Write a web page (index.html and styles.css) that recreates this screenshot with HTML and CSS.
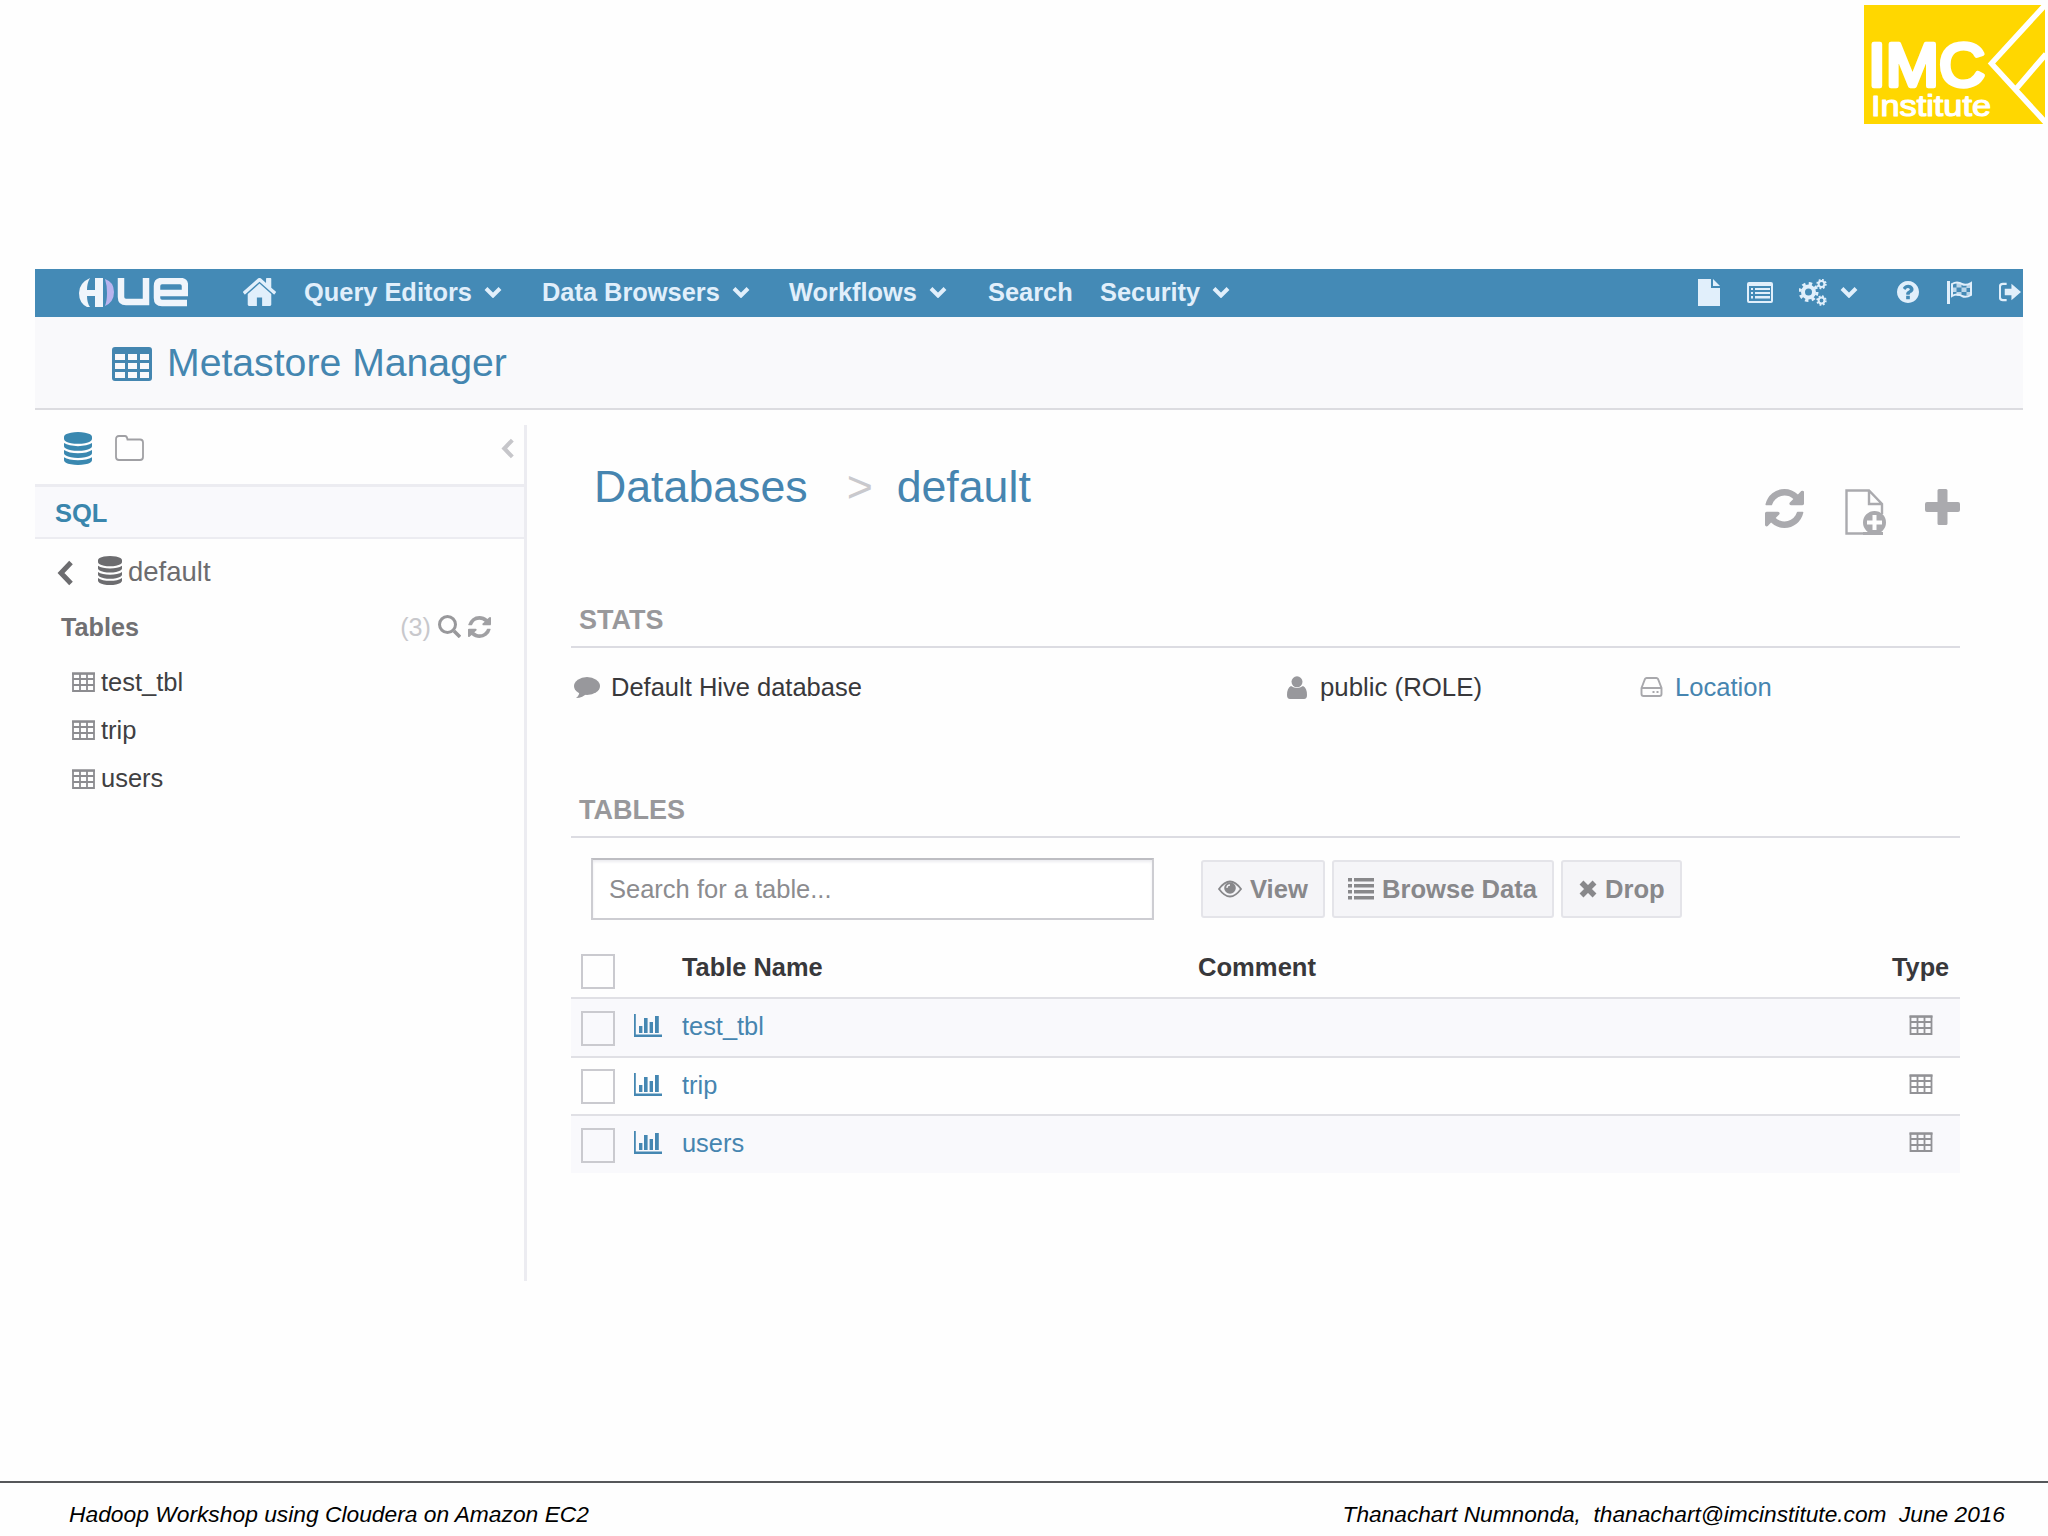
FILE: index.html
```html
<!DOCTYPE html>
<html lang="en">
<head>
<meta charset="utf-8">
<title>Metastore Manager</title>
<link rel="stylesheet" href="styles.css">
</head>
<body>
<svg class="defs" width="0" height="0" aria-hidden="true">
  <symbol id="refresh" viewBox="128 128 1536 1536" preserveAspectRatio="none"><path d="M1639 1056q0 5-1 7-64 268-268 434.5t-478 166.5q-146 0-282.5-55t-243.5-157l-129 129q-19 19-45 19t-45-19-19-45v-448q0-26 19-45t45-19h448q26 0 45 19t19 45-19 45l-137 137q71 66 161 102t187 36q134 0 250-65t186-179q11-17 53-117 8-23 30-23h192q13 0 22.5 9.5t9.5 22.5zm25-800v448q0 26-19 45t-45 19h-448q-26 0-45-19t-19-45 19-45l138-138q-148-137-349-137-134 0-250 65t-186 179q-11 17-53 117-8 23-30 23h-199q-13 0-22.5-9.5t-9.5-22.5v-7q65-268 270-434.5t480-166.5q146 0 284 55.5t245 156.5l130-129q19-19 45-19t45 19 19 45z"/></symbol>
  <symbol id="home" viewBox="89 256 1614 1280" preserveAspectRatio="none"><path d="M1472 992v480q0 26-19 45t-45 19h-384v-384h-256v384h-384q-26 0-45-19t-19-45v-480q0-1 .5-3t.5-3l575-474 575 474q1 2 1 6zm223-69l-62 74q-8 9-21 11h-3q-13 0-21-7l-692-577-692 577q-12 8-24 7-13-2-21-11l-62-74q-8-10-7-23.5t11-21.5l719-599q32-26 76-26t76 26l244 204v-195q0-14 9-23t23-9h192q14 0 23 9t9 23v408l219 182q10 8 11 21.5t-7 23.5z"/></symbol>
  <symbol id="database" viewBox="128 0 1536 1792" preserveAspectRatio="none"><path d="M896 768q237 0 443-43t325-127v170q0 69-103 128t-280 93.5-385 34.5-385-34.5-280-93.5-103-128v-170q119 84 325 127t443 43zm0 768q237 0 443-43t325-127v170q0 69-103 128t-280 93.5-385 34.5-385-34.5-280-93.5-103-128v-170q119 84 325 127t443 43zm0-384q237 0 443-43t325-127v170q0 69-103 128t-280 93.5-385 34.5-385-34.5-280-93.5-103-128v-170q119 84 325 127t443 43zm0-1152q208 0 385 34.5t280 93.5 103 128v128q0 69-103 128t-280 93.5-385 34.5-385-34.5-280-93.5-103-128v-128q0-69 103-128t280-93.5 385-34.5z"/></symbol>
  <symbol id="help" viewBox="128 128 1536 1536"><path d="M1024 1376v-192q0-14-9-23t-23-9h-192q-14 0-23 9t-9 23v192q0 14 9 23t23 9h192q14 0 23-9t9-23zm256-672q0-88-55.5-163t-138.5-116-170-41q-243 0-371 213-15 24 8 42l132 100q7 6 19 6 16 0 25-12 53-68 86-92 34-24 86-24 48 0 85.5 26t37.5 59q0 38-20 61t-68 45q-63 28-115.5 86.5t-52.5 125.5v36q0 14 9 23t23 9h192q14 0 23-9t9-23q0-19 21.5-49.5t54.5-49.5q32-18 49-28.5t46-35 44.5-48 28-60.5 12.5-81zm384 192q0 209-103 385.5t-279.5 279.5-385.5 103-385.5-103-279.5-279.5-103-385.5 103-385.5 279.5-279.5 385.5-103 385.5 103 279.5 279.5 103 385.5z"/></symbol>
  <symbol id="down" viewBox="0 0 18 12"><path d="M2 2.5l7 7 7-7" fill="none" stroke="currentColor" stroke-width="4"/></symbol>
  <symbol id="left" viewBox="0 0 16 26"><path d="M14 2.5L4 13l10 10.5" fill="none" stroke="currentColor" stroke-width="5"/></symbol>
  <symbol id="table" viewBox="0 0 40 34" preserveAspectRatio="none"><path fill-rule="evenodd" d="M3 0h34q3 0 3 3v28q0 3-3 3H3q-3 0-3-3V3q0-3 3-3zM3 7v6h10V7zm13 0v6h9V7zm12 0v6h9V7zM3 16v6h10v-6zm13 0v6h9v-6zm12 0v6h9v-6zM3 25v6h10v-6zm13 0v6h9v-6zm12 0v6h9v-6z"/></symbol>
  <symbol id="grid" viewBox="0 0 23 20"><path d="M1 1.5h21v17.5H1zM1 7h21M1 13h21M8 1v18M15 1v18" fill="none" stroke="currentColor" stroke-width="1.8"/><path d="M0 .5h23v2.2H0z"/></symbol>
  <symbol id="chart" viewBox="0 0 28 24"><path d="M0 1h1.8v20.5H28V24H0zM5 13h3.4v7H5zM10 5h3.6v15H10zM15.600 9h3.400v11h-3.400zM21 3h3.800v17H21z"/></symbol>
</svg>

<header class="slide-head">
  <svg class="imc" viewBox="0 0 181 119" role="img" aria-label="IMC Institute">
    <path fill="#ffd700" d="M0 0h181v119H0z"/>
    <path d="M182-1L127.500 58.500 182 118M182 49l-30 35" fill="none" stroke="#fff" stroke-width="5.500"/>
    <text class="imc-name" x="4" y="81" textLength="117" lengthAdjust="spacingAndGlyphs">IMC</text>
    <text class="imc-sub" x="7" y="110.500" textLength="120" lengthAdjust="spacingAndGlyphs">Institute</text>
  </svg>
</header>

<div class="app">
  <nav class="navbar">
    <svg class="hue" viewBox="0 0 109 29" role="img" aria-label="Hue">
      <path d="M11 0Q0 5 0 15t8 14h3Q8 25 8 18h8v11h8V0h-8v12H8Q8 5 11 0z"/>
      <path fill="#b9b4ee" d="M26 1q9 3 9 13t-9 14q2-5 2-13T26 1z"/>
      <path d="M42 0v19q0 5 5 5h20V0M108 25H83q-5 0-5-5V8q0-5 5-5h18q5 0 5 5v7H80" fill="none" stroke="currentColor" stroke-width="6.500"/>
    </svg>
    <svg class="home"><use href="#home"/></svg>
    <a class="menu w-query">Query Editors<svg class="caret"><use href="#down"/></svg></a>
    <a class="menu w-data">Data Browsers<svg class="caret"><use href="#down"/></svg></a>
    <a class="menu w-flows">Workflows<svg class="caret"><use href="#down"/></svg></a>
    <a class="menu w-search">Search</a>
    <a class="menu">Security<svg class="caret"><use href="#down"/></svg></a>
    <div class="tools">
      <svg class="t-file" viewBox="0 0 22 27"><path d="M0 0h13v9h9v18H0z"/><path d="M15 0l7 7h-7z"/></svg>
      <svg class="t-list" viewBox="0 0 26 21"><path fill-rule="evenodd" d="M2 0h22q2 0 2 2v17q0 2-2 2H2q-2 0-2-2V2q0-2 2-2zm0 4v15h22V4z"/><path d="M4 6h2v2H4zm4 0h15v2H8zM4 10h2v2H4zm4 0h15v2H8zM4 14h2v2.500H4zm4 0h15v2.500H8z"/></svg>
      <svg class="t-cogs" viewBox="0 0 28 27"><g fill="none" stroke="currentColor"><circle cx="9.500" cy="13" r="5.500" stroke-width="4"/><circle cx="9.500" cy="13" r="8.500" stroke-width="3" stroke-dasharray="3.400 3.275"/><circle cx="22.500" cy="5" r="2.900" stroke-width="2"/><circle cx="22.500" cy="5" r="4.300" stroke-width="1.800" stroke-dasharray="1.800 1.577"/><circle cx="22.500" cy="21.500" r="2.900" stroke-width="2"/><circle cx="22.500" cy="21.500" r="4.300" stroke-width="1.800" stroke-dasharray="1.800 1.577"/></g></svg>
      <svg class="caret t-caret"><use href="#down"/></svg>
      <svg class="t-help"><use href="#help"/></svg>
      <svg class="t-flag" viewBox="0 0 25 23"><path d="M0 0h3v23H0z"/><path d="M5 3q5-3 10 0 4 2 9-1v12q-5 3-9 1-5-3-10 0z" fill="none" stroke="currentColor" stroke-width="2"/><path d="M9.500 1.500h5v5h-5zM5 6.500h4.500v4.500H5zM14.500 6.500h5v4.500h-5zM9.500 11h5v4h-5zM19.500 3H24v4h-4.500zM19.500 11H24v3.500h-4.500z" fill-opacity=".75"/></svg>
      <svg class="t-out" viewBox="0 0 23 20"><path d="M8 1.500H4q-3 0-3 3v11q0 3 3 3h4" fill="none" stroke="currentColor" stroke-width="2.200"/><path d="M6 6.500h7V1.500L23 10l-10 8.500v-5H6z"/></svg>
    </div>
  </nav>

  <div class="title-bar">
    <svg class="title-icon"><use href="#table"/></svg>
    <h1>Metastore Manager</h1>
  </div>

  <div class="body">
    <aside class="sidebar">
      <div class="tabs">
        <svg class="tab-db"><use href="#database"/></svg>
        <svg class="tab-folder" viewBox="0 0 29 26"><path d="M1 4.500Q1 1 4 1h6q2 0 2.500 3.500H25q3 0 3 3V22q0 3-3 3H4q-3 0-3-3z" fill="none" stroke="currentColor" stroke-width="1.800"/></svg>
        <svg class="collapse"><use href="#left"/></svg>
      </div>
      <div class="source">SQL</div>
      <div class="current">
        <svg class="back"><use href="#left"/></svg>
        <svg class="db"><use href="#database"/></svg>
        <span>default</span>
      </div>
      <div class="tables-head">
        <strong>Tables</strong>
        <span class="count">(3)</span>
        <svg class="search" viewBox="0 0 23 23"><path d="M16 16l6 6" stroke="currentColor" stroke-width="3.500"/><circle cx="9.500" cy="9.500" r="8" fill="none" stroke="currentColor" stroke-width="3"/></svg>
        <svg class="reload"><use href="#refresh"/></svg>
      </div>
      <ul class="side-list">
        <li><svg><use href="#grid"/></svg>test_tbl</li>
        <li><svg><use href="#grid"/></svg>trip</li>
        <li><svg><use href="#grid"/></svg>users</li>
      </ul>
    </aside>

    <main>
      <div class="crumb-row">
        <div class="crumbs"><a>Databases</a><span>&gt;</span><a>default</a></div>
        <svg class="a-refresh"><use href="#refresh"/></svg>
        <svg class="a-new" viewBox="0 0 41 46"><path d="M22 44.500H1.500v-43H24L37 15v10M24 2v13h13" fill="none" stroke="currentColor" stroke-width="2.400"/><path fill-rule="evenodd" d="M29.500 22a11.500 11.500 0 1 1 0 23 11.500 11.500 0 0 1 0-23zM27.500 26v5.500H22v4h5.500V41h4v-5.500H37v-4h-5.500V26z"/><path d="M18 43h20v3H18z"/></svg>
        <svg class="a-plus" viewBox="0 0 35 36"><path d="M14 0h7q1.500 0 1.500 1.500V13H33q2 0 2 2v6q0 2-2 2H22.500v11.500q0 1.500-1.500 1.500h-7q-1.500 0-1.500-1.500V23H2q-2 0-2-2v-6q0-2 2-2h10.500V1.500Q12.500 0 14 0z"/></svg>
      </div>

      <h2>STATS</h2>
      <div class="stats">
        <svg class="s-comment" viewBox="0 0 26 22"><ellipse cx="13" cy="9" rx="13" ry="9"/><path d="M5 14q1 4-3 7 7 0 11-5z"/></svg>
        <span class="s-desc">Default Hive database</span>
        <svg class="s-user" viewBox="0 0 20 23"><circle cx="10" cy="5.800" r="5.500"/><path d="M4 10q6 4 12 0 4 2 4 9 0 4-3 4H3q-3 0-3-4 0-7 4-9z"/></svg>
        <span class="s-role">public (ROLE)</span>
        <svg class="s-disk" viewBox="0 0 22 20"><path d="M1 11L4.500 2q.5-1 1.500-1h10q1 0 1.500 1L21 11v6q0 2-2 2H3q-2 0-2-2zM1 11h20" fill="none" stroke="currentColor" stroke-width="1.900"/><path d="M12 14h2v2h-2zm4 0h2v2h-2z"/></svg>
        <a>Location</a>
      </div>

      <h2 class="second">TABLES</h2>
      <div class="actions">
        <input type="text" placeholder="Search for a table...">
        <button class="b-view"><svg viewBox="0 0 24 18"><path d="M1 9q11-15 22 0-11 15-22 0z" fill="none" stroke="currentColor" stroke-width="1.800"/><circle cx="12" cy="8" r="5.800"/><path d="M9 8q0-3 3-3" fill="none" stroke="#f5f5f8" stroke-width="1.300"/></svg>View</button>
        <button class="b-browse"><svg viewBox="0 0 26 22"><path d="M0 0h4v3.500H0zm6 0h20v3.500H6zM0 6h4v3.500H0zm6 0h20v3.500H6zM0 12h4v3.500H0zm6 0h20v3.500H6zM0 18h4v3.500H0zm6 0h20v3.500H6z"/></svg>Browse Data</button>
        <button class="b-drop"><svg viewBox="0 0 18 18"><path d="M2.500 2.500l13 13m0-13l-13 13" stroke="currentColor" stroke-width="5.500"/></svg>Drop</button>
      </div>

      <div class="grid">
        <div class="row head"><i class="check"></i><b class="name">Table Name</b><b class="comment">Comment</b><b class="type">Type</b></div>
        <div class="row odd"><i class="check"></i><svg class="chart"><use href="#chart"/></svg><a class="name">test_tbl</a><svg class="kind"><use href="#grid"/></svg></div>
        <div class="row"><i class="check"></i><svg class="chart"><use href="#chart"/></svg><a class="name">trip</a><svg class="kind"><use href="#grid"/></svg></div>
        <div class="row odd"><i class="check"></i><svg class="chart"><use href="#chart"/></svg><a class="name">users</a><svg class="kind"><use href="#grid"/></svg></div>
      </div>
    </main>
  </div>
</div>

<footer>
  <span class="workshop">Hadoop Workshop using Cloudera on Amazon EC2</span>
  <span class="author">Thanachart Numnonda,  thanachart@imcinstitute.com  June 2016</span>
</footer>
</body>
</html>
```
FILE: styles.css
```css
* { box-sizing: border-box; }

body {
  margin: 0;
  width: 2048px;
  height: 1536px;
  overflow: hidden;
  display: flex;
  flex-direction: column;
  background: #fefefe;
  color: #404042;
  font: 25.6px/30px "Liberation Sans", Arial, sans-serif;
}

svg { display: block; flex: none; fill: currentColor; }
.defs { position: absolute; }
a { color: #4685b0; }

/* slide header */
.slide-head { height: 269px; padding: 5px 3px 0 0; display: flex; justify-content: flex-end; align-items: flex-start; }
.imc { width: 181px; height: 119px; }
.imc text { fill: #fff; stroke: #fff; stroke-linejoin: round; }
.imc-name { font-size: 62px; stroke-width: 4.5px; }
.imc-sub { font-size: 30px; stroke-width: 1.2px; }

/* application frame */
.app { width: 1988px; height: 1212px; margin-left: 35px; }

.navbar {
  height: 48px;
  padding: 0 2px 2px 44px;
  display: flex;
  align-items: center;
  background: #448ab6;
  color: #e1effb;
  font-size: 25.4px;
  font-weight: bold;
  white-space: nowrap;
}
.hue { width: 109px; height: 29px; color: #f0f5fb; }
.home { width: 33px; height: 28px; margin: 0 28px 0 55px; }
.menu { color: inherit; display: flex; align-items: center; gap: 12px; }
.caret { width: 18px; height: 12px; }
.w-query { width: 238px; }
.w-data { width: 247px; }
.w-flows { width: 199px; }
.w-search { width: 112px; }
.tools { margin-left: auto; display: flex; align-items: center; }
.t-file { width: 22px; height: 27px; margin-right: 27px; }
.t-list { width: 26px; height: 21px; margin-right: 26px; }
.t-cogs { width: 28px; height: 27px; margin-right: 13px; }
.t-caret { margin-right: 39px; }
.t-help { width: 22px; height: 22px; margin-right: 28px; }
.t-flag { width: 25px; height: 23px; margin-right: 27px; }
.t-out { width: 22px; height: 20px; }

.title-bar {
  height: 93px;
  padding: 0 0 0 77px;
  display: flex;
  align-items: center;
  background: #f9f9fb;
  border-bottom: 2px solid #dcdce0;
  color: #4486b0;
}
.title-icon { width: 40px; height: 34px; margin: 3px 15px 0 0; }
h1 { margin: 0; font-size: 39.2px; font-weight: normal; line-height: 44px; }

.body { display: flex; }

/* sidebar */
.sidebar { width: 492px; height: 856px; margin-top: 15px; border-right: 3px solid #ececf1; }
.tabs { height: 59px; padding: 0 10px 12px 29px; display: flex; align-items: center; }
.tab-db { width: 28px; height: 33px; color: #3a88b0; }
.tab-folder { width: 29px; height: 26px; margin: 0 0 2px 23px; color: #a0a0a4; }
.collapse { width: 13px; height: 21px; margin-left: auto; color: #c6c6ca; }
.source {
  height: 55px;
  padding-left: 20px;
  border: solid #ececf1;
  border-width: 3px 0 2px;
  background: #f9f9fc;
  color: #3a86ad;
  font-size: 25.5px;
  font-weight: bold;
  line-height: 52px;
}
.current { height: 68px; padding: 0 0 2px 22px; display: flex; align-items: center; color: #6c6c6f; font-size: 27.5px; }
.back { width: 16px; height: 26px; margin-top: 2px; }
.db { width: 24px; height: 29px; margin: 0 6px 4px 25px; }
.tables-head { height: 39px; padding: 0 33px 0 26px; display: flex; align-items: center; color: #707073; font-size: 25.2px; }
.count { margin-left: auto; color: #c8c8cc; }
.search { width: 23px; height: 23px; margin: 0 7px; color: #98989b; }
.reload { width: 23px; height: 22px; color: #a0a0a3; }
.side-list { margin: 11.500px 0 0; padding: 0; list-style: none; }
.side-list li { height: 48.300px; padding-left: 37px; display: flex; align-items: center; gap: 6px; font-size: 25.5px; }
.side-list svg { width: 23px; height: 20px; margin-top: 1px; color: #8c8c90; }

/* main column */
main { width: 1389px; margin-left: 44px; }
.crumb-row { height: 189px; padding-top: 51px; display: flex; color: #aaaaae; }
.crumbs { width: 1194px; display: flex; padding-left: 23px; font-size: 44.700px; line-height: 52px; }
.crumbs span { width: 50px; margin-left: 39px; color: #c9c9cd; }
.a-refresh { width: 39px; height: 39px; margin-top: 28px; }
.a-new { width: 41px; height: 46px; margin: 28px 39px 0 41px; }
.a-plus { width: 35px; height: 36px; margin-top: 28px; }

h2 {
  height: 49px;
  margin: 0;
  padding-left: 8px;
  border-bottom: 2px solid #dcdce2;
  color: #98989b;
  font-size: 27px;
  line-height: 42px;
}
.stats { height: 78px; padding-left: 3px; display: flex; align-items: center; color: #38383b; white-space: nowrap; }
.stats svg { color: #98989c; }
.s-comment { width: 26px; height: 22px; margin: 2px 11px 0 0; }
.s-desc { width: 676px; font-size: 25.5px; }
.s-user { width: 20px; height: 23px; margin-right: 13px; }
.s-role { width: 320px; font-size: 25.8px; }
.stats .s-disk { width: 23px; height: 20px; margin-right: 12px; color: #a8a8ac; }

h2.second { margin-top: 63px; }
.actions { height: 104px; padding: 20px 0 0 20px; display: flex; align-items: flex-start; }
input {
  width: 563px;
  height: 62px;
  margin-right: 47px;
  padding: 0 16px;
  border: 2px solid #cdcdd2;
  border-top-color: #bdbdc2;
  background: #fff;
  box-shadow: inset 0 2px 3px #ececf0;
  font: 25.5px "Liberation Sans", Arial, sans-serif;
}
input::placeholder { color: #8c8c8f; opacity: 1; }
button {
  height: 58px;
  margin: 2px 7px 0 0;
  padding: 0 0 0 15px;
  display: flex;
  align-items: center;
  gap: 8px;
  border: 2px solid #e4e4e9;
  border-radius: 3px;
  background: #f5f5f8;
  color: #88888b;
  font: bold 25.6px "Liberation Sans", Arial, sans-serif;
  white-space: nowrap;
}
.b-view { width: 124px; }
.b-view svg { width: 24px; height: 18px; }
.b-browse { width: 222px; padding-left: 14px; }
.b-browse svg { width: 26px; height: 22px; }
.b-drop { width: 121px; padding-left: 16px; }
.b-drop svg { width: 18px; height: 18px; }

.row { height: 58.500px; padding-left: 10px; display: flex; border-top: 2px solid #e0e0e5; }
.row.head { height: 55px; border: 0; color: #38383b; }
.odd { background: #f9f9fc; }
.check { width: 34px; height: 35px; margin-top: 11.500px; border: 2px solid #cacacf; }
.chart { width: 28px; height: 24px; margin: 14px 0 0 19px; color: #4587b2; }
.name { width: 516px; margin: 12px 0 0 20px; font-size: 25.4px; }
.head .name { margin: 10px 0 0 67px; }
.comment { width: 694px; margin-top: 10px; }
.type { margin-top: 10px; font-size: 25.3px; }
.kind { width: 24px; height: 20px; margin: 16px 27px 0 auto; color: #929296; }

/* slide footer */
footer {
  height: 55px;
  padding: 16px 43px 0 69px;
  display: flex;
  justify-content: space-between;
  border-top: 2px solid #55575a;
  color: #000;
  font-size: 22.700px;
  font-style: italic;
  white-space: pre;
}
.workshop { font-size: 22.800px; }
```
